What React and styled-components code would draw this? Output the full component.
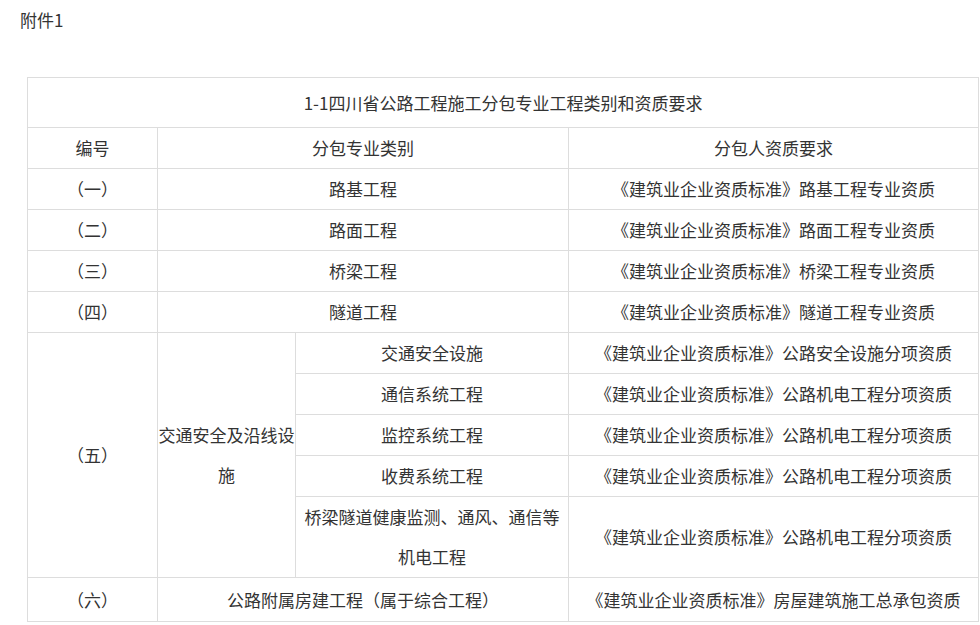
import React from 'react';
import styled, { createGlobalStyle } from 'styled-components';

const GlobalStyle = createGlobalStyle`
  html, body {
    margin: 0;
    padding: 0;
    background: #fff;
  }
  body {
    font-family: "Microsoft YaHei", "Noto Sans CJK SC", "Noto Sans", sans-serif;
    color: #333;
  }
`;

const Page = styled.div`
  padding: 0 20px;
  font-size: 17px;
`;

const Attachment = styled.p`
  margin: 0;
  line-height: 40px;
  height: 40px;
`;

const Spacer = styled.div`
  height: 37px;
`;

const Table = styled.table`
  border-collapse: collapse;
  table-layout: fixed;
  width: 951px;
  margin-left: 7px;
  font-size: 17px;
`;

const Cell = styled.td`
  border: 1px solid #dddddd;
  padding: 0 ${({ $pad }) => $pad || 0}px;
  text-align: center;
  vertical-align: middle;
  line-height: 40px;
  color: #333;
`;

const TitleCell = styled(Cell)`
  height: 49px;
`;

const Row = styled.tr`
  height: ${({ $h }) => $h || 41}px;
`;

const simpleRows = [
  ['（一）', '路基工程', '《建筑业企业资质标准》路基工程专业资质'],
  ['（二）', '路面工程', '《建筑业企业资质标准》路面工程专业资质'],
  ['（三）', '桥梁工程', '《建筑业企业资质标准》桥梁工程专业资质'],
  ['（四）', '隧道工程', '《建筑业企业资质标准》隧道工程专业资质'],
];

const trafficRows = [
  ['交通安全设施', '《建筑业企业资质标准》公路安全设施分项资质', 41],
  ['通信系统工程', '《建筑业企业资质标准》公路机电工程分项资质', 41],
  ['监控系统工程', '《建筑业企业资质标准》公路机电工程分项资质', 41],
  ['收费系统工程', '《建筑业企业资质标准》公路机电工程分项资质', 41],
  ['桥梁隧道健康监测、通风、通信等机电工程', '《建筑业企业资质标准》公路机电工程分项资质', 81],
];

export default function App() {
  return (
    <Page>
      <GlobalStyle />
      <Attachment>附件1</Attachment>
      <Spacer />
      <Table>
        <colgroup>
          <col style={{ width: 130 }} />
          <col style={{ width: 138 }} />
          <col style={{ width: 273 }} />
          <col style={{ width: 410 }} />
        </colgroup>
        <tbody>
          <Row $h={50}>
            <TitleCell colSpan={4}>1-1四川省公路工程施工分包专业工程类别和资质要求</TitleCell>
          </Row>
          <Row>
            <Cell>编号</Cell>
            <Cell colSpan={2}>分包专业类别</Cell>
            <Cell>分包人资质要求</Cell>
          </Row>
          {simpleRows.map(([no, kind, req]) => (
            <Row key={no}>
              <Cell>{no}</Cell>
              <Cell colSpan={2}>{kind}</Cell>
              <Cell>{req}</Cell>
            </Row>
          ))}
          {trafficRows.map(([kind, req, h], i) => (
            <Row key={i} $h={h}>
              {i === 0 && <Cell rowSpan={5}>（五）</Cell>}
              {i === 0 && <Cell rowSpan={5}>交通安全及沿线设施</Cell>}
              <Cell $pad={8}>{kind}</Cell>
              <Cell>{req}</Cell>
            </Row>
          ))}
          <Row $h={44}>
            <Cell>（六）</Cell>
            <Cell colSpan={2}>公路附属房建工程（属于综合工程）</Cell>
            <Cell>《建筑业企业资质标准》房屋建筑施工总承包资质</Cell>
          </Row>
        </tbody>
      </Table>
    </Page>
  );
}
